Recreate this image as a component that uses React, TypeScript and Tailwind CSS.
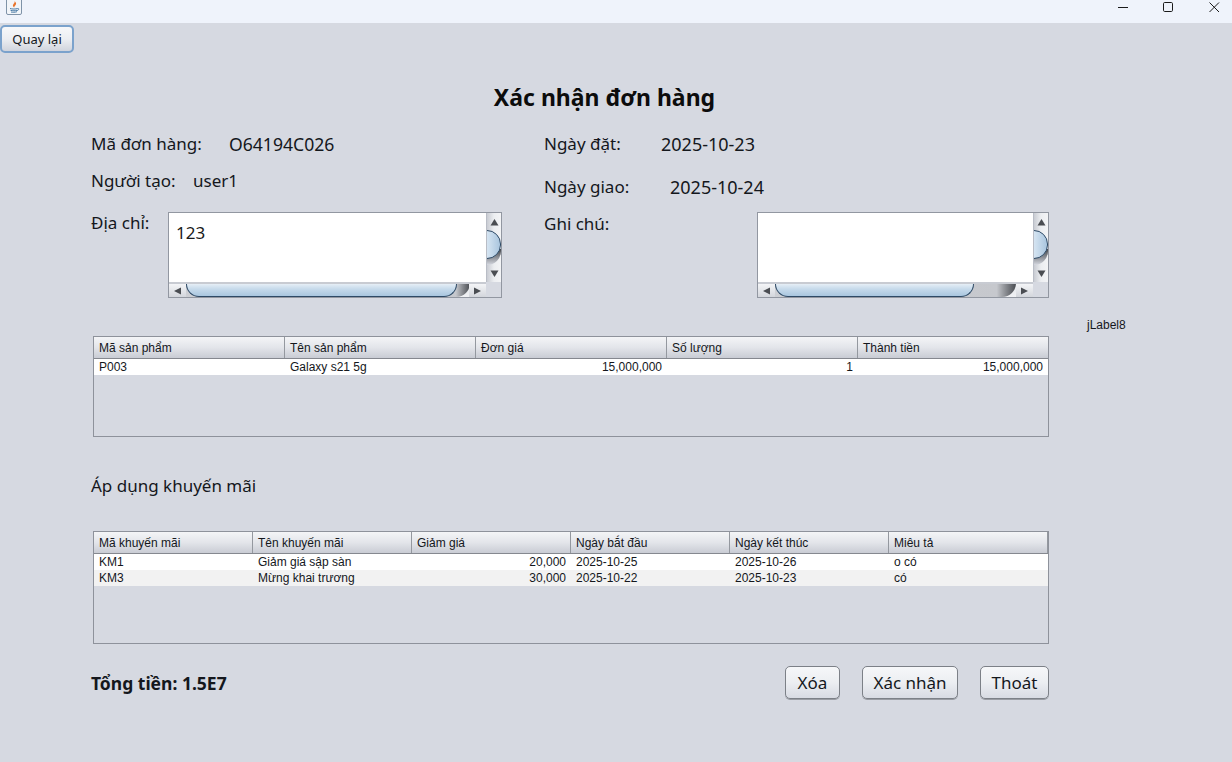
const ui = { fontFamily: '"Noto Sans", "Open Sans", sans-serif' };

const JavaIcon = () => (
  <svg width="16" height="15" viewBox="0 0 16 15" fill="none">
    <rect x="0.5" y="-2" width="15" height="16.5" rx="1.5" fill="#f2f5f9" stroke="#7f93a8" />
    <path d="M8.5 1C9.5 3 6.5 4 7 6c.2.8 1 1.3 1.3 1.6C8 6 10.6 5 10 3 9.800 2.300 9 1.600 8.500 1Z" fill="#e8732a" />
    <path d="M4 8.500c2 .7 6 .7 7.500 0M4.500 10.300c2 .6 5 .6 6.500 0M5 12c1.500.4 4 .4 6-.3" stroke="#4d7da8" strokeWidth="1" />
    <path d="M11.500 8.500c1.600-.5 2 1.500-.5 2" stroke="#4d7da8" strokeWidth="1" />
  </svg>
);

const TitleBar = () => (
  <div className="flex h-[23px] items-start justify-between bg-[#eff3fb] pl-[6px]">
    <JavaIcon />
    <div className="mr-[-5px] flex text-[#1a1a1a]">
      <div className="flex h-[14px] w-[44px] items-center justify-center">
        <svg width="12" height="12" viewBox="0 0 12 12"><path d="M1 6.500h10" stroke="currentColor" strokeWidth="1" /></svg>
      </div>
      <div className="flex h-[14px] w-[46px] items-center justify-center">
        <svg width="12" height="12" viewBox="0 0 12 12"><rect x="1.500" y="1.500" width="9" height="9" rx="1.200" fill="none" stroke="currentColor" strokeWidth="1" /></svg>
      </div>
      <div className="flex h-[14px] w-[46px] items-center justify-center">
        <svg width="12" height="12" viewBox="0 0 12 12"><path d="M1.500 1.500l9.500 9.500M11 1.500l-9.500 9.500" stroke="currentColor" strokeWidth="1" /></svg>
      </div>
    </div>
  </div>
);

const Arrow = ({ dir }: { dir: 'up' | 'down' | 'left' | 'right' }) => {
  const points = {
    up: '4.500,1 8.500,7.500 0.500,7.500',
    down: '0.500,0.500 8.500,0.500 4.500,7',
    left: '1,4 8,0.500 8,7.500',
    right: '8,4 1,0.500 1,7.500',
  }[dir];
  return (
    <svg width="9" height="8" viewBox="0 0 9 8">
      <polygon points={points} fill="#4a4d52" />
    </svg>
  );
};

const ScrollPane = ({ width, thumbWidth, shadowWidth, children }: { width: string; thumbWidth: string; shadowWidth: string; children?: React.ReactNode }) => (
  <div className={`grid ${width} h-[86px] shrink-0 grid-cols-[1fr_15px] grid-rows-[1fr_15px] border border-[#9297a1] bg-[#d6d9e1]`}>
    <div className="overflow-hidden bg-white px-[7px] pt-[7px] text-[17px] leading-[26px] text-[#1a1a1a]">{children}</div>

    {/* vertical bar */}
    <div className="relative overflow-hidden border-l border-[#b9bdc6] bg-gradient-to-r from-[#c9ccd3] via-[#eceef1] to-[#f3f4f6]">
      <div className="flex h-[17px] items-center justify-center"><Arrow dir="up" /></div>
      <div className="absolute left-[-8px] top-[36px] h-[16px] w-[22px] rounded-br-[14px] bg-gradient-to-b from-[#44474c] to-[#d6d9e1]" />
      <div className="absolute left-[-10px] top-[17px] h-[29px] w-[24px] rounded-r-[14px] border border-[#2e4a66] bg-gradient-to-r from-[#f0f5fa] via-[#cfe0ef] to-[#a9c5de]" />
      <div className="absolute bottom-0 flex h-[17px] w-full items-center justify-center"><Arrow dir="down" /></div>
    </div>

    {/* horizontal bar */}
    <div className="relative overflow-hidden border-t-2 border-[#c8cbd2] bg-gradient-to-b from-[#e4e6ea] to-[#f0f1f4]">
      <div className="absolute left-0 top-0 flex h-full w-[17px] items-center justify-center bg-gradient-to-b from-[#f4f5f7] to-[#d3d6dc]"><Arrow dir="left" /></div>
      <div className={`absolute left-[17px] top-[-2px] h-[15px] ${shadowWidth} rounded-br-[14px] bg-gradient-to-r from-[#cdcfd4] via-[#c6c8cd] to-[#4a4d52]`} />
      <div className={`absolute left-[17px] top-[-2px] h-[15px] ${thumbWidth} rounded-b-[13px] border-b border-x border-[#2e4a66] bg-gradient-to-b from-[#f2f6fa] via-[#c6daeb] to-[#a9c6df]`} />
      <div className="absolute right-0 top-0 flex h-full w-[17px] items-center justify-center bg-gradient-to-b from-[#f4f5f7] to-[#d3d6dc]"><Arrow dir="right" /></div>
    </div>
    <div className="bg-[#d6d9e1]" />
  </div>
);

type Column = { name: string; right?: boolean };

const DataTable = ({ columns, rows, height, inner }: { columns: Column[]; rows: string[][]; height: string; inner: string }) => (
  <div className={`ml-[2px] w-[956px] ${height} overflow-hidden border border-[#8e929b] text-[12px] leading-[16px] text-[#14171c]`} style={{ fontFamily: '"Liberation Sans", Arial, sans-serif' }}>
    <div className={`flex ${inner} h-[22px] border-b border-[#85888f] bg-gradient-to-b from-[#f4f5f7] via-[#e3e5ea] to-[#c9ccd4]`}>
      {columns.map((c) => (
        <div key={c.name} className="flex-1 border-r border-[#94989f] px-[5px] pt-[3px]">{c.name}</div>
      ))}
    </div>
    {rows.map((row, r) => (
      <div key={row[0]} className={`flex ${inner} h-[16px] ${r % 2 === 0 ? 'bg-white' : 'bg-[#f2f2f2]'}`}>
        {row.map((cell, i) => (
          <div key={i} className={`flex-1 px-[5px] ${columns[i].right ? 'text-right' : ''}`}>
            <div className={i === row.length - 1 && columns[i].right ? 'mr-[1px]' : ''}>{cell}</div>
          </div>
        ))}
      </div>
    ))}
  </div>
);

const ActionButton = ({ label, width }: { label: string; width: string }) => (
  <button className={`${width} h-[33px] rounded-[5px] border border-[#7c8087] bg-gradient-to-b from-[#f6f7f9] via-[#eceef2] to-[#d8dbe3] text-[17px] leading-[30px] text-[#14171c] shadow-[0_1px_0_#9a9da4]`}>
    {label}
  </button>
);

const productColumns: Column[] = [
  { name: 'Mã sản phẩm' },
  { name: 'Tên sản phẩm' },
  { name: 'Đơn giá', right: true },
  { name: 'Số lượng', right: true },
  { name: 'Thành tiền', right: true },
];

const promoColumns: Column[] = [
  { name: 'Mã khuyến mãi' },
  { name: 'Tên khuyến mãi' },
  { name: 'Giảm giá', right: true },
  { name: 'Ngày bắt đầu' },
  { name: 'Ngày kết thúc' },
  { name: 'Miêu tả' },
];

// header labels stay left aligned, only cells follow "right"
export default function App() {
  return (
    <div className="h-[762px] w-[1232px] overflow-hidden bg-[#d6d9e1] text-[#14171c]" style={ui}>
      <TitleBar />

      <div className="pt-[2px]">
        <button className="h-[28px] w-[74px] rounded-[5px] border-2 border-[#7ba2cc] bg-gradient-to-b from-[#f7f8fa] via-[#eceef2] to-[#d0d4dd] text-[13px] leading-[20px] text-[#14171c]">
          Quay lại
        </button>
      </div>

      <main className="pl-[91px]">
        <h1 className="mt-[28px] w-[1027px] text-center text-[23px] font-bold leading-[32px] text-[#0c0c0c]">Xác nhận đơn hàng</h1>

        <div className="mt-[19px] flex text-[17px] leading-[24px]">
          <div className="w-[453px]">
            <div className="flex">
              <span className="w-[138px]">Mã đơn hàng:</span>
              <span className="text-[17.6px]">O64194C026</span>
            </div>
            <div className="mt-[13px] flex">
              <span className="w-[102px]">Người tạo:</span>
              <span>user1</span>
            </div>
            <div className="mt-[19px] flex">
              <span className="w-[77px] mt-[-1px]">Địa chỉ:</span>
              <ScrollPane width="w-[334px]" thumbWidth="w-[271px]" shadowWidth="w-[284px] via-95%">123</ScrollPane>
            </div>
          </div>
          <div>
            <div className="flex">
              <span className="w-[117px]">Ngày đặt:</span>
              <span className="text-[18px]">2025-10-23</span>
            </div>
            <div className="mt-[19px] flex">
              <span className="w-[126px]">Ngày giao:</span>
              <span className="text-[18px]">2025-10-24</span>
            </div>
            <div className="mt-[13px] flex">
              <span className="w-[213px]">Ghi chú:</span>
              <ScrollPane width="w-[292px]" thumbWidth="w-[199px]" shadowWidth="w-[241px] via-92%" />
            </div>
          </div>
        </div>

        <div className="ml-[996px] mt-[19px] h-[19px] whitespace-nowrap text-[12px] leading-[16px]" style={{ fontFamily: '"Liberation Sans", Arial, sans-serif' }}>jLabel8</div>

        <DataTable
          height="h-[101px]"
          inner="w-[955px]"
          columns={productColumns}
          rows={[['P003', 'Galaxy s21 5g', '15,000,000', '1', '15,000,000']]}
        />

        <div className="mt-[37px] text-[17px] leading-[24px]">Áp dụng khuyến mãi</div>

        <div className="mt-[33px]">
          <DataTable
            height="h-[113px]"
            inner="w-[954px]"
            columns={promoColumns}
            rows={[
              ['KM1', 'Giảm giá sập sàn', '20,000', '2025-10-25', '2025-10-26', 'o có'],
              ['KM3', 'Mừng khai trương', '30,000', '2025-10-22', '2025-10-23', 'có'],
            ]}
          />
        </div>

        <div className="mt-[22px] flex w-[958px] items-center">
          <span className="flex-1 pt-[2px] text-[17.5px] font-bold">Tổng tiền: 1.5E7</span>
          <div className="flex gap-[22px]">
            <ActionButton label="Xóa" width="w-[55px]" />
            <ActionButton label="Xác nhận" width="w-[96px]" />
            <ActionButton label="Thoát" width="w-[69px]" />
          </div>
        </div>
      </main>
    </div>
  );
}
